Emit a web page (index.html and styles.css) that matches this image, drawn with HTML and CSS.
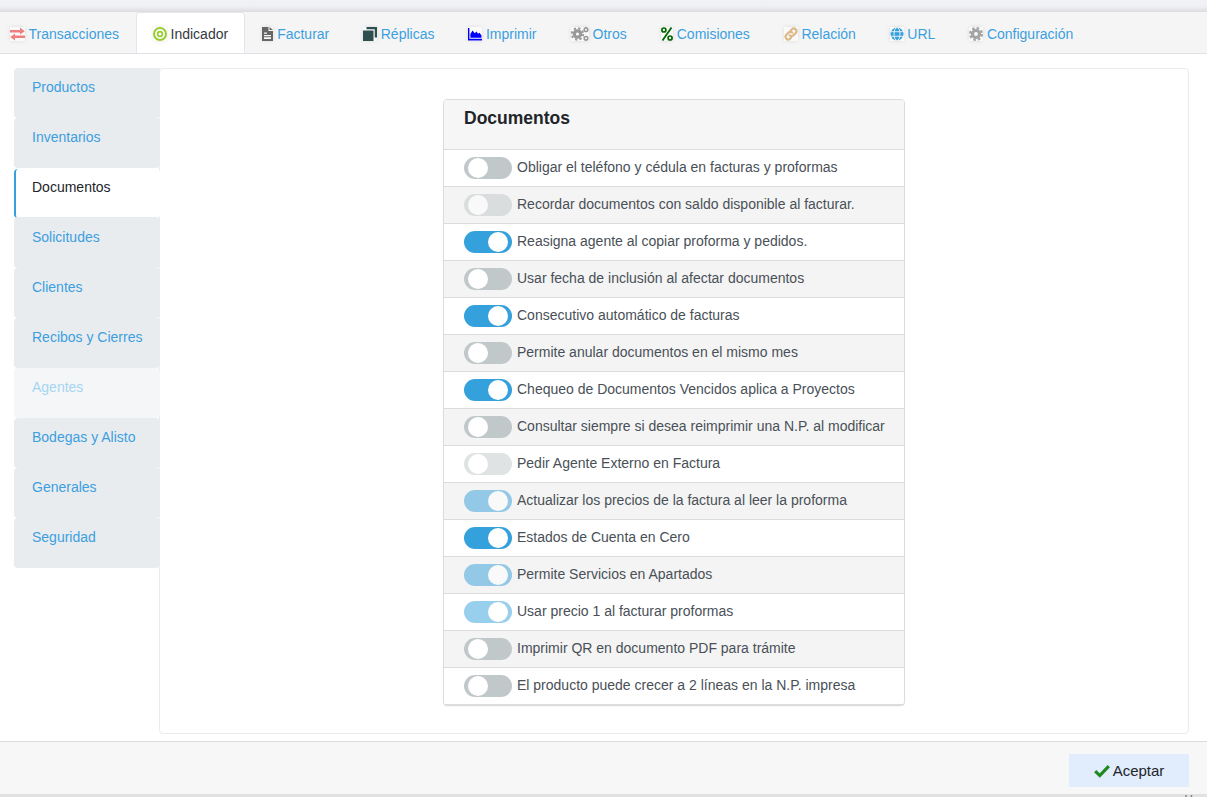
FILE: index.html
```html
<!DOCTYPE html>
<html lang="es">
<head>
<meta charset="utf-8">
<title>Documentos</title>
<link rel="stylesheet" href="styles.css">
</head>
<body>
<div class="topstrip"></div>
<nav class="tabs">
  <a class="tab first"><span class="ico w15"><svg viewBox="0 0 15 14"><path fill="#f08080" d="M0 3h10V.6L14.800 4.200 10 7.600V5.400H0zM15 8.600H5V6.400L.2 10 5 13.400V11h10z"/></svg></span>Transacciones</a>
  <a class="tab active"><span class="ico"><svg viewBox="0 0 14 14"><circle cx="7" cy="7" r="6" fill="none" stroke="#9acd32" stroke-width="2"/><circle cx="7" cy="7" r="2.400" fill="none" stroke="#9acd32" stroke-width="1.700"/></svg></span>Indicador</a>
  <a class="tab"><span class="ico w11"><svg viewBox="0 0 11 14"><path fill="#666" fill-rule="evenodd" d="M0 0h6.500v4H11v10H0zM7.500 0 11 3H7.500zM2 5.500v1.200h3V5.500zM2 8v1.200h7V8zM2 10.200V12h7v-1.800z"/></svg></span>Facturar</a>
  <a class="tab"><span class="ico"><svg viewBox="0 0 14 14"><path fill="#2f4f4f" d="M3.500 0H14v10.500h-2.300V2.300H3.500z"/><path fill="#2f4f4f" d="M0 3.500h10.500V14H0z"/></svg></span>Réplicas</a>
  <a class="tab"><span class="ico"><svg viewBox="0 0 14 14"><path fill="#00f" d="M0 1h1.400v10.800H14V13.500H0z"/><path fill="#00f" d="M2.400 10.800V7L4.500 3.600 6.800 6.200 8.500 4.400 10 6.800 11.500 5.800 13.500 8.600V10.800z"/></svg></span>Imprimir</a>
  <a class="tab"><span class="ico w18"><svg viewBox="0 0 18 14"><g fill="none" stroke="#999"><circle cx="6.500" cy="7" r="3.200" stroke-width="3.200"/><circle cx="6.500" cy="7" r="5.700" stroke-width="2" stroke-dasharray="2.300 2.170"/><circle cx="15" cy="2.700" r="1.800" stroke-width="1.600"/><circle cx="15" cy="11.300" r="1.800" stroke-width="1.600"/></g></svg></span>Otros</a>
  <a class="tab"><span class="ico w12"><svg viewBox="0 0 12 14"><g fill="none" stroke="#060"><circle cx="2.900" cy="3" r="2" stroke-width="1.700"/><circle cx="9.100" cy="11" r="2" stroke-width="1.700"/><path stroke-width="1.800" d="M10.500 .5 1.500 13.500"/></g></svg></span>Comisiones</a>
  <a class="tab"><span class="ico"><svg viewBox="0 0 14 14"><g fill="none" stroke="#deb887" stroke-width="2.200" stroke-linecap="round"><path d="M5.700 8.300a2.700 2.700 0 0 0 3.800 0l2.300-2.300a2.700 2.700 0 0 0-3.800-3.800L7 3.200"/><path d="M8.300 5.700a2.700 2.700 0 0 0-3.800 0L2.200 8a2.700 2.700 0 0 0 3.800 3.800l1-1"/></g></svg></span>Relación</a>
  <a class="tab"><span class="ico"><svg viewBox="0 0 14 14"><circle cx="7" cy="7" r="6.500" fill="#34a0dc"/><g fill="none" stroke="#f5f5f6" stroke-width=".9"><ellipse cx="7" cy="7" rx="3" ry="6.500"/><path d="M.5 4.700h13M.5 9.300h13"/></g></svg></span>URL</a>
  <a class="tab"><span class="ico"><svg viewBox="0 0 14 14"><g fill="none" stroke="#a3a3a3"><circle cx="7" cy="7" r="3.500" stroke-width="3.200"/><circle cx="7" cy="7" r="5.800" stroke-width="2.400" stroke-dasharray="2.500 2.050"/></g></svg></span>Configuración</a>
</nav>
<main class="main">
  <aside class="side">
    <a class="side-item">Productos</a>
    <a class="side-item">Inventarios</a>
    <a class="side-item current">Documentos</a>
    <a class="side-item">Solicitudes</a>
    <a class="side-item">Clientes</a>
    <a class="side-item">Recibos y Cierres</a>
    <a class="side-item off">Agentes</a>
    <a class="side-item">Bodegas y Alisto</a>
    <a class="side-item">Generales</a>
    <a class="side-item">Seguridad</a>
  </aside>
  <section class="pane">
    <div class="panel">
      <h2 class="panel-title">Documentos</h2>
      <div class="row"><span class="sw"></span><span class="label">Obligar el teléfono y cédula en facturas y proformas</span></div>
      <div class="row"><span class="sw dis"></span><span class="label">Recordar documentos con saldo disponible al facturar.</span></div>
      <div class="row"><span class="sw on"></span><span class="label">Reasigna agente al copiar proforma y pedidos.</span></div>
      <div class="row"><span class="sw"></span><span class="label">Usar fecha de inclusión al afectar documentos</span></div>
      <div class="row"><span class="sw on"></span><span class="label">Consecutivo automático de facturas</span></div>
      <div class="row"><span class="sw"></span><span class="label">Permite anular documentos en el mismo mes</span></div>
      <div class="row"><span class="sw on"></span><span class="label">Chequeo de Documentos Vencidos aplica a Proyectos</span></div>
      <div class="row"><span class="sw"></span><span class="label">Consultar siempre si desea reimprimir una N.P. al modificar</span></div>
      <div class="row"><span class="sw dis"></span><span class="label">Pedir Agente Externo en Factura</span></div>
      <div class="row"><span class="sw on dis"></span><span class="label">Actualizar los precios de la factura al leer la proforma</span></div>
      <div class="row"><span class="sw on"></span><span class="label">Estados de Cuenta en Cero</span></div>
      <div class="row"><span class="sw on dis"></span><span class="label">Permite Servicios en Apartados</span></div>
      <div class="row"><span class="sw on dis"></span><span class="label">Usar precio 1 al facturar proformas</span></div>
      <div class="row"><span class="sw"></span><span class="label">Imprimir QR en documento PDF para trámite</span></div>
      <div class="row"><span class="sw"></span><span class="label">El producto puede crecer a 2 líneas en la N.P. impresa</span></div>
    </div>
  </section>
</main>
<footer class="foot">
  <button class="accept"><svg class="check" viewBox="0 0 16 16"><path fill="none" stroke="#1e8a1e" stroke-width="3.200" d="M1.200 8.200 5.800 12.600 14.800 3.200"/></svg>Aceptar</button>
</footer>
<div class="bottomstrip"><span class="ver">Versión</span></div>
</body>
</html>
```
FILE: styles.css
```css
* { box-sizing: border-box; }
html, body { height: 100%; }
body {
  margin: 0;
  height: 797px;
  overflow: hidden;
  display: flex;
  flex-direction: column;
  background: #fff;
  font-family: "Liberation Sans", Arial, sans-serif;
  font-size: 14px;
  line-height: 21px;
  color: #212529;
}
.topstrip {
  flex: 0 0 12px;
  background: linear-gradient(#f1f2f6 0, #eff0f4 55%, #dcdce0 100%);
}
.tabs {
  flex: 0 0 41px;
  display: flex;
  background: #f5f5f6;
  border-bottom: 1px solid #dee2e6;
  white-space: nowrap;
}
.tab {
  display: flex;
  align-items: center;
  height: 41px;
  padding: 2px 16px 0;
  border: 1px solid transparent;
  border-bottom: 0;
  color: #3c9fdf;
}
.tab.first { padding-left: 10px; border-left: 0; }
.tab.active {
  background: #fff;
  color: #343a40;
  border-color: #e4e6ea;
  border-radius: 4px 4px 0 0;
}
.ico {
  flex: none;
  width: 14px;
  height: 14px;
  margin-right: 3.500px;
  background: #fafafa;
  box-shadow: 0 0 4px rgba(0, 0, 0, .1);
}
.ico.w11 { width: 11px; margin-right: 4px; }
.ico.w12 { width: 12px; margin-right: 4px; }
.ico.w15 { width: 15px; }
.ico.w18 { width: 18px; margin-right: 4px; }
.ico svg { width: 100%; height: 100%; display: block; }
.main {
  flex: 1;
  min-height: 0;
  display: flex;
  padding: 14px 18px 7px 14px;
}
.side {
  flex: 0 0 146px;
  position: relative;
  z-index: 1;
  margin-right: -1px;
}
.side-item {
  display: block;
  height: 50px;
  padding: 9px 0 0 18px;
  background: #e9ecef;
  border-radius: 4px;
  color: #3c9fdf;
}
.side-item:first-child { border-radius: 4px 0 4px 4px; }
.side-item.current {
  height: 49px;
  margin-top: 1px;
  padding: 8px 0 0 16px;
  background: #fff;
  color: #212529;
  border-left: 2px solid #34a0dc;
}
.side-item.current + .side-item { margin-top: -1px; height: 51px; padding-top: 10px; }
.side-item.off { background: #f4f6f8; color: #a6d5f2; }
.pane {
  flex: 1;
  display: flex;
  justify-content: center;
  align-items: flex-start;
  padding-top: 30px;
  border: 1px solid #e9ebee;
  border-radius: 4px;
}
.panel {
  width: 462px;
  border: 1px solid #dcdcdc;
  border-radius: 4px;
  background: #fff;
  box-shadow: 0 1px 1px rgba(0, 0, 0, .04);
}
.panel-title {
  margin: 0;
  height: 50px;
  padding: 7px 20px 0;
  background: #f6f6f6;
  border-bottom: 1px solid #dcdcdc;
  border-radius: 3px 3px 0 0;
  font-size: 17.500px;
  line-height: 22px;
  font-weight: 700;
  color: #212529;
}
.row {
  display: flex;
  align-items: center;
  height: 37px;
  padding-left: 20px;
  border-bottom: 1px solid #dcdcdc;
  color: #495057;
}
.row:nth-child(odd) { background: #f4f4f4; }
.label { padding-bottom: 2px; }
.sw {
  position: relative;
  flex: none;
  width: 48px;
  height: 22px;
  margin-right: 5px;
  border-radius: 11px;
  background: #c1c8ca;
}
.sw::after {
  content: "";
  position: absolute;
  top: 1px;
  left: 4px;
  width: 20px;
  height: 20px;
  border-radius: 50%;
  background: #fff;
}
.sw.on { background: #34a0dc; }
.sw.on::after { left: 24px; }
.sw.dis { opacity: .5; }
.foot {
  flex: 0 0 53px;
  display: flex;
  justify-content: flex-end;
  align-items: flex-start;
  padding: 12px 18px 0 0;
  background: #f7f7f7;
  border-top: 1px solid #dcdcdc;
}
.accept {
  display: flex;
  align-items: center;
  justify-content: center;
  width: 120px;
  height: 33px;
  padding: 0;
  border: 0;
  background: #e1ecfc;
  font: inherit;
  font-size: 15px;
  color: #212529;
}
.check { width: 16px; height: 16px; margin-right: 3px; }
.bottomstrip {
  flex: 0 0 3px;
  overflow: hidden;
  background: #e2e2e2;
  text-align: right;
  font-size: 11px;
  line-height: 11px;
  color: #666;
}
.ver { display: inline-block; width: 22px; overflow: hidden; text-align: left; vertical-align: top; }
```
